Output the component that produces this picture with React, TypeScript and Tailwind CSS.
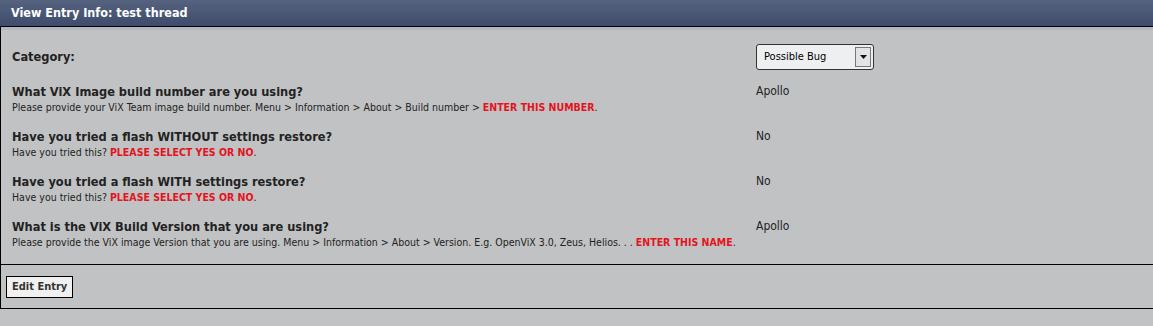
import React from "react";

const font = { fontFamily: "'DejaVu Sans Condensed', 'DejaVu Sans', sans-serif" };

const rows = [
  {
    q: "What ViX Image build number are you using?",
    hint: "Please provide your ViX Team image build number. Menu > Information > About > Build number > ",
    red: "ENTER THIS NUMBER",
    value: "Apollo",
  },
  {
    q: "Have you tried a flash WITHOUT settings restore?",
    hint: "Have you tried this? ",
    red: "PLEASE SELECT YES OR NO",
    value: "No",
  },
  {
    q: "Have you tried a flash WITH settings restore?",
    hint: "Have you tried this? ",
    red: "PLEASE SELECT YES OR NO",
    value: "No",
  },
  {
    q: "What is the ViX Build Version that you are using?",
    hint: "Please provide the ViX image Version that you are using. Menu > Information > About > Version. E.g. OpenViX 3.0, Zeus, Helios. . . ",
    red: "ENTER THIS NAME",
    value: "Apollo",
  },
];

export default function App() {
  return (
    <div className="w-[1153px] h-[326px] bg-[#c1c2c4] overflow-hidden text-[#222]" style={font}>
      <div className="h-[27px] bg-gradient-to-b from-[#56637f] to-[#3e4b6b] border-b border-black flex items-center pl-[11px]">
        <span className="text-white font-bold text-[12.5px]">View Entry Info: test thread</span>
      </div>
      <div className="border-l border-black border-b">
        <div className="h-[3px] bg-[#b4b7bf]" />
        <div className="pl-[11px] pt-[14px] pb-[15px] flex flex-col gap-[14px]">
          <div className="flex items-center h-[26px] mb-[-1px]">
            <div className="w-[744px] font-bold text-[12.7px]">Category:</div>
            <div className="w-[118px] h-[26px] rounded-[3px] border border-[#333] bg-[#eeeff1] flex items-center justify-between pl-[7px] pr-[2px]">
              <span className="text-[11px] text-black">Possible Bug</span>
              <div className="w-[16px] h-[20px] border border-[#777] bg-[#e2e3e5] flex items-center justify-center">
                <svg width="7" height="4" viewBox="0 0 7 4"><path d="M0 0h7L3.5 4z" fill="#111" /></svg>
              </div>
            </div>
          </div>
          {rows.map((r) => (
            <div key={r.q} className="flex h-[31px]">
              <div className="w-[744px]">
                <div className="font-bold text-[12.7px] leading-[17px]">{r.q}</div>
                <div className="text-[10.5px] leading-[14px]">
                  {r.hint}
                  <span className="font-bold text-[#e3141d]">{r.red}</span>.
                </div>
              </div>
              <div className="text-[12px] leading-[17px]">{r.value}</div>
            </div>
          ))}
        </div>
      </div>
      <div className="border-l border-black border-b h-[44px] flex items-start pt-[11px] pl-[5px]">
        <button className="h-[22px] px-[5px] border border-black bg-[#f0f0f0] text-[11px] font-bold text-[#333]">
          Edit Entry
        </button>
      </div>
    </div>
  );
}
